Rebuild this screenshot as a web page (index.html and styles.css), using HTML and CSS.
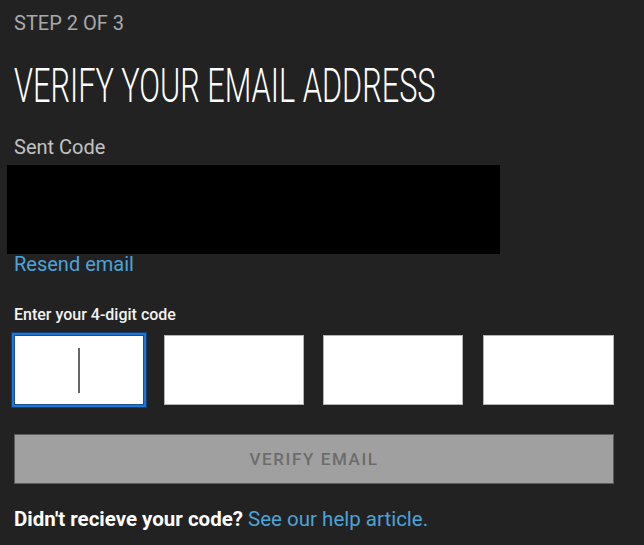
FILE: index.html
```html
<!DOCTYPE html>
<html lang="en">
<head>
    <meta charset="UTF-8">
    <meta name="viewport" content="width=device-width, initial-scale=1.0">
    <title>Verify your email address</title>
    <link rel="stylesheet" href="styles.css">
</head>
<body>
    <div class="container">
        <div class="step">STEP 2 OF 3</div>
        <h1><span>VERIFY YOUR EMAIL ADDRESS</span></h1>

        <div class="sent-label">Sent Code</div>
        <div class="redacted"></div>
        <a href="#" class="resend">Resend email</a>

        <div class="code-label">Enter your 4-digit code</div>
        <div class="code-boxes">
            <div class="code-box focused"><span class="caret"></span></div>
            <div class="code-box"></div>
            <div class="code-box"></div>
            <div class="code-box"></div>
        </div>

        <button type="button" class="verify-btn" disabled>VERIFY EMAIL</button>

        <p class="help"><strong>Didn't recieve your code?</strong> <a href="#">See our help article.</a></p>
    </div>
</body>
</html>
```

FILE: styles.css
```css
body {
    margin: 0;
    padding: 0;
    background: #222222;
    font-family: Roboto, 'Liberation Sans', sans-serif;
    color: #fff;
}

.container {
    width: 600px;
    padding: 11px 0 0 14px;
}

.step {
    font-size: 20px;
    line-height: 24px;
    color: #a9a9a9;
}

h1 {
    margin: 23px 0 0;
    font-size: 48px;
    line-height: 56px;
    font-weight: 300;
    white-space: nowrap;
}

h1 span {
    display: inline-block;
    transform: scaleX(0.64);
    transform-origin: left center;
}

.sent-label {
    margin-top: 21px;
    font-size: 20px;
    line-height: 24px;
    color: #c2c2c2;
}

.redacted {
    margin: 6px 0 0 -7px;
    width: 493px;
    height: 89px;
    background: #000;
}

.resend {
    display: block;
    font-size: 20px;
    line-height: 20px;
    color: #4da3d9;
    text-decoration: none;
}

.code-label {
    margin-top: 31px;
    font-size: 16px;
    line-height: 20px;
    font-weight: 500;
    color: #f2f2f2;
}

.code-boxes {
    margin-top: 10px;
    display: grid;
    grid-template-columns: 130px 140px 140px 131px;
    justify-content: space-between;
}

.code-box {
    height: 68px;
    background: #fff;
    border: 1px solid #b5b5b5;
    display: flex;
    align-items: center;
    justify-content: center;
}

.code-box.focused {
    border-color: #164f94;
    box-shadow: 0 0 0 2px #1f74d8, 0 0 0 3px #123e73;
}

.caret {
    width: 2px;
    height: 45px;
    background: #666;
}

.verify-btn {
    display: block;
    margin-top: 29px;
    width: 600px;
    height: 50px;
    background: #a0a0a0;
    border: 1px solid #5c5c5c;
    color: #6c6c6c;
    font-family: Roboto, 'Liberation Sans', sans-serif;
    font-size: 17px;
    font-weight: 500;
    letter-spacing: 1.6px;
    padding: 0;
}

.help {
    margin: 23px 0 0;
    font-size: 20.5px;
    line-height: 24px;
}

.help strong {
    font-weight: 700;
}

.help a {
    color: #4da3d9;
    text-decoration: none;
}
```
